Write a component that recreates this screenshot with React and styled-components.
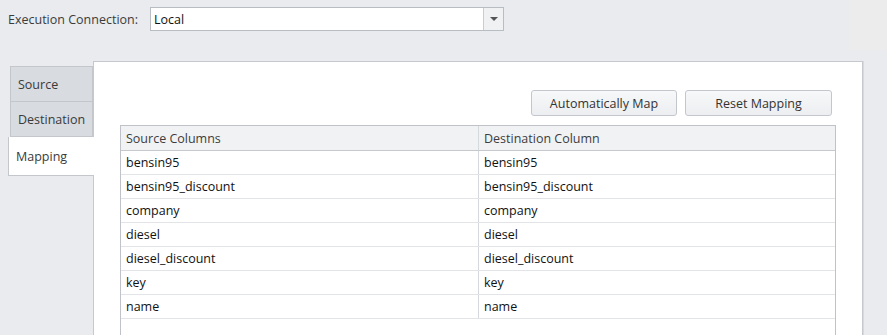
import styled, { createGlobalStyle } from "styled-components";

const GlobalStyle = createGlobalStyle`
  html, body {
    margin: 0;
    padding: 0;
    background: #e9ebef;
    overflow: hidden;
  }
  body {
    font-family: "Open Sans", "Liberation Sans", Arial, sans-serif;
    font-size: 12.5px;
    color: #333;
  }
`;

const Page = styled.div`
  position: relative;
  width: 887px;
  height: 335px;
  overflow: hidden;
`;

const Corner = styled.div`
  position: absolute;
  top: 0;
  right: 0;
  width: 38px;
  height: 50px;
  background: #ececec;
`;

const TopBar = styled.div`
  display: flex;
  align-items: center;
  height: 24px;
  padding: 7px 0 0 8px;
`;

const Label = styled.span`
  width: 142px;
  color: #3b3b3b;
`;

const Combo = styled.div`
  display: flex;
  width: 352px;
  height: 22px;
  border: 1px solid #b8bcc3;
  background: #fff;
`;

const ComboText = styled.div`
  flex: 1;
  display: flex;
  align-items: center;
  padding-left: 3px;
  color: #111;
`;

const ComboButton = styled.div`
  width: 19px;
  border-left: 1px solid #c9ccd1;
  background: #f0f1f3;
  display: flex;
  align-items: center;
  justify-content: center;

  &::after {
    content: "";
    border-left: 4px solid transparent;
    border-right: 4px solid transparent;
    border-top: 4px solid #555;
  }
`;

const Main = styled.div`
  display: flex;
  align-items: flex-start;
  margin-top: 30px;
`;

const TabStrip = styled.div`
  width: 85px;
  margin-top: 5px;
  margin-left: 8px;
  display: flex;
  flex-direction: column;
  position: relative;
  z-index: 1;
`;

const Tab = styled.div`
  height: ${(p) => (p.$active ? "39px" : p.$first ? "36px" : "35px")};
  margin-left: ${(p) => (p.$active ? "0" : "2px")};
  margin-right: ${(p) => (p.$active ? "-1px" : "0")};
  padding-left: 7px;
  display: flex;
  align-items: center;
  background: ${(p) => (p.$active ? "#fff" : "#d8dbe0")};
  border: 1px solid #c3c6cb;
  border-right: ${(p) => (p.$active ? "none" : "1px solid #c3c6cb")};
  border-top: ${(p) => (p.$first ? "1px solid #c3c6cb" : "none")};
  color: #3a3a3a;
  box-sizing: border-box;
`;

const Panel = styled.div`
  width: 770px;
  height: 290px;
  background: #fff;
  border: 1px solid #c5c8cd;
  box-shadow: 1px 0 0 #d6d9de;
  box-sizing: border-box;
  padding: 28px 30px 0 26px;
`;

const ButtonRow = styled.div`
  display: flex;
  justify-content: flex-end;
  gap: 8px;
`;

const Button = styled.button`
  width: ${(p) => p.$w}px;
  height: 26px;
  border: 1px solid #c3c7cd;
  border-radius: 3px;
  background: linear-gradient(#f7f8f9, #eceef1);
  font-family: inherit;
  font-size: 12.5px;
  color: #333;
  padding: 0;
`;

const Table = styled.div`
  margin-top: 9px;
  margin-right: -4px;
  height: 240px;
  border: 1px solid #bfc3c9;
  border-bottom: none;
`;

const Row = styled.div`
  display: grid;
  grid-template-columns: 357px 1fr;
  height: ${(p) => (p.$head ? "25px" : "24px")};
  background: ${(p) => (p.$head ? "#f1f2f4" : "#fff")};
  border-bottom: 1px solid ${(p) => (p.$head ? "#c5c8cd" : "#e3e4e7")};
  box-sizing: border-box;
`;

const Cell = styled.div`
  display: flex;
  align-items: center;
  padding-left: 5px;
  color: ${(p) => (p.$head ? "#3d3d3d" : "#111")};

  & + & {
    border-left: 1px solid #d5d8dc;
  }
`;

const rows = [
  "bensin95",
  "bensin95_discount",
  "company",
  "diesel",
  "diesel_discount",
  "key",
  "name",
];

export default function App() {
  return (
    <Page>
      <GlobalStyle />
      <Corner />
      <TopBar>
        <Label>Execution Connection:</Label>
        <Combo>
          <ComboText>Local</ComboText>
          <ComboButton />
        </Combo>
      </TopBar>
      <Main>
        <TabStrip>
          <Tab $first>Source</Tab>
          <Tab>Destination</Tab>
          <Tab $active>Mapping</Tab>
        </TabStrip>
        <Panel>
          <ButtonRow>
            <Button $w={146}>Automatically Map</Button>
            <Button $w={147}>Reset Mapping</Button>
          </ButtonRow>
          <Table>
            <Row $head>
              <Cell $head>Source Columns</Cell>
              <Cell $head>Destination Column</Cell>
            </Row>
            {rows.map((r) => (
              <Row key={r}>
                <Cell>{r}</Cell>
                <Cell>{r}</Cell>
              </Row>
            ))}
          </Table>
        </Panel>
      </Main>
    </Page>
  );
}
